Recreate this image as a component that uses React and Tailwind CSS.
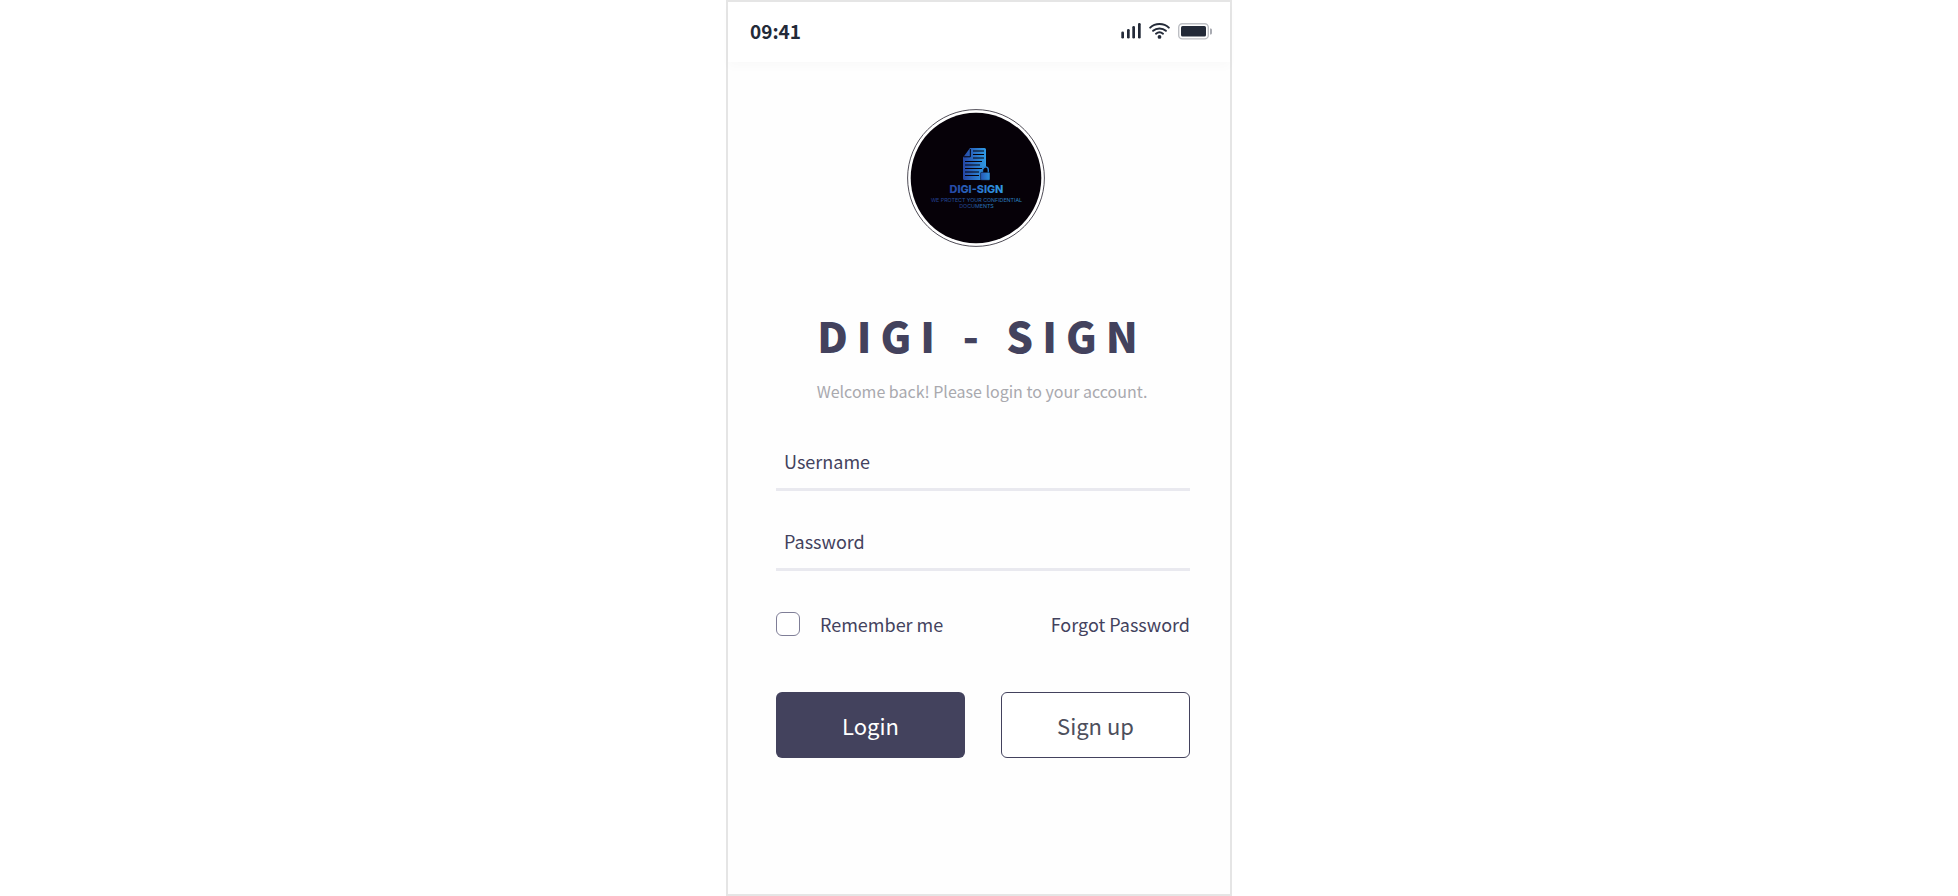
import React from "react";

function SignalIcon() {
  return (
    <svg width="20" height="16" viewBox="0 0 20 16" fill="#232a38" aria-hidden="true">
      <rect x="0.3" y="8.5" width="2.7" height="7" rx="1.3" />
      <rect x="6" y="6" width="2.7" height="9.5" rx="1.3" />
      <rect x="11.3" y="3" width="2.7" height="12.5" rx="1.3" />
      <rect x="17" y="0" width="2.7" height="15.5" rx="1.3" />
    </svg>
  );
}

function WifiIcon() {
  return (
    <svg width="21" height="16" viewBox="0 0 21 16" fill="none" stroke="#232a38" strokeWidth="2" strokeLinecap="round" aria-hidden="true">
      <path d="M1.2 4.6C6.2-0.2 14.8-0.2 19.8 4.6" />
      <path d="M4.1 7.8C7.6 4.6 13.4 4.6 16.9 7.8" />
      <path d="M7 10.7C9 9 12 9 14 10.7" />
      <circle cx="10.5" cy="13.9" r="1.9" fill="#232a38" stroke="none" />
    </svg>
  );
}

function BatteryIcon() {
  return (
    <svg width="34" height="17" viewBox="0 0 34 17" aria-hidden="true">
      <rect x="0.7" y="0.7" width="29.6" height="15.2" rx="3.6" fill="none" stroke="#bdbfc4" strokeWidth="1.4" />
      <rect x="3" y="3" width="25" height="10.6" rx="1.6" fill="#232a38" />
      <path d="M32 5.5h1q1 .3 1 1.4v3.2q0 1.1-1 1.4h-1z" fill="#a9abb2" />
    </svg>
  );
}

function Logo() {
  return (
    <svg className="size-[138px]" viewBox="0 0 138 138" role="img" aria-label="Digi-Sign logo">
      <defs>
        <linearGradient id="page" x1="0" y1="0" x2="1" y2="0">
          <stop offset="0" stopColor="#2545a4" />
          <stop offset="1" stopColor="#2f9be6" />
        </linearGradient>
        <linearGradient id="tagline" x1="0" y1="0" x2="1" y2="0">
          <stop offset="0" stopColor="#223a8c" />
          <stop offset="1" stopColor="#2a86c8" />
        </linearGradient>
        <linearGradient id="lock" x1="0" y1="0" x2="1" y2="0">
          <stop offset="0" stopColor="#2757b4" />
          <stop offset="1" stopColor="#2d92dd" />
        </linearGradient>
      </defs>
      <circle cx="69" cy="69" r="68.4" fill="#fff" stroke="#3b3843" strokeWidth="0.9" />
      <circle cx="69" cy="69" r="65.3" fill="#060108" />
      <path d="M56 48.5L63 39h14.5q1.5 0 1.5 1.5V58q-4 2-4 6v7H57.5q-1.5 0-1.5-1.5z" fill="url(#page)" />
      <path d="M63.3 40v7.8h-6.5" fill="none" stroke="#060108" strokeWidth="1" />
      <path d="M66 42h11M66 45.5h11M66 49h11M58 52.5h17M58 56h15M58 59.5h17M58 63h14M58 66.5h14" stroke="#060108" strokeWidth="1.2" />
      <path d="M75.5 64v-3.2a2.9 2.9 0 0 1 5.8 0V64" fill="none" stroke="#2a80d0" strokeWidth="1.4" />
      <rect x="73.6" y="63.3" width="9.4" height="8" rx="1" fill="url(#lock)" stroke="#060108" strokeWidth="0.5" />
      <text x="69.5" y="84" textAnchor="middle" fontFamily="Inter, sans-serif" fontWeight="800" fontSize="10.8" fill="url(#page)">DIGI-SIGN</text>
      <text x="69.5" y="92.5" textAnchor="middle" fontFamily="Inter, sans-serif" fontSize="5.3" fill="url(#tagline)">WE PROTECT YOUR CONFIDENTIAL</text>
      <text x="69.5" y="99" textAnchor="middle" fontFamily="Inter, sans-serif" fontSize="5.3" fill="url(#tagline)">DOCUMENTS</text>
    </svg>
  );
}

function Field({ id, label, type }) {
  return (
    <div className="grid items-center text-lg">
      <input
        id={id}
        type={type}
        placeholder=" "
        className="peer col-start-1 row-start-1 h-14 w-full border-b-3 border-[#e9e9ef] bg-transparent px-2 text-[#43425d] outline-none"
      />
      <label
        htmlFor={id}
        className="col-start-1 row-start-1 cursor-text justify-self-start px-2 pb-1 leading-8 peer-[:not(:placeholder-shown)]:invisible"
      >
        {label}
      </label>
    </div>
  );
}

export default function App() {
  return (
    <div className="flex min-h-screen justify-center bg-white font-['Noto_Sans_CJK_SC','Noto_Sans',sans-serif] text-[#43425d]">
      <main className="flex w-full max-w-[506px] flex-col border-2 border-[#e5e5e5] bg-[#fefefe]">
        <header className="flex h-[60px] items-center justify-between bg-white pr-[18px] pb-0.5 pl-[22px] shadow-[0_5px_10px_rgba(0,0,0,0.02)]">
          <time className="text-[19px] leading-6 font-bold text-[#232a38]">09:41</time>
          <div className="flex items-center gap-2">
            <SignalIcon />
            <WifiIcon />
            <BatteryIcon />
          </div>
        </header>
        <div className="flex flex-col pt-[47px] pr-10 pl-12">
          <div className="flex justify-center pr-3.5">
            <Logo />
          </div>
          <div className="mt-16 flex flex-col items-center pr-0.5">
            <h1 className="text-[42px] leading-12 font-black tracking-[9px] whitespace-nowrap">DIGI - SIGN</h1>
            <p className="mt-5 text-base leading-6 text-[#a9a9ae]">Welcome back! Please login to your account.</p>
          </div>
          <form className="mt-8" onSubmit={(e) => e.preventDefault()}>
            <div className="flex flex-col gap-6">
              <Field id="username" label="Username" type="text" />
              <Field id="password" label="Password" type="password" />
            </div>
            <div className="mt-[41px] flex items-center justify-between">
              <label className="flex items-center gap-5 text-lg leading-6">
                <input type="checkbox" className="size-6 appearance-none rounded-md border border-[#7f7e97] bg-white checked:bg-[#43425d]" />
                Remember me
              </label>
              <a href="#forgot" className="text-lg leading-6">Forgot Password</a>
            </div>
            <div className="mt-14 grid grid-cols-2 gap-9">
              <button type="submit" className="h-[66px] rounded-md bg-[#43425d] text-[22px] text-white">Login</button>
              <button type="button" className="h-[66px] rounded-md border border-[#43425d] bg-white text-[22px] text-[#4d4f5c]">Sign up</button>
            </div>
          </form>
        </div>
      </main>
    </div>
  );
}
